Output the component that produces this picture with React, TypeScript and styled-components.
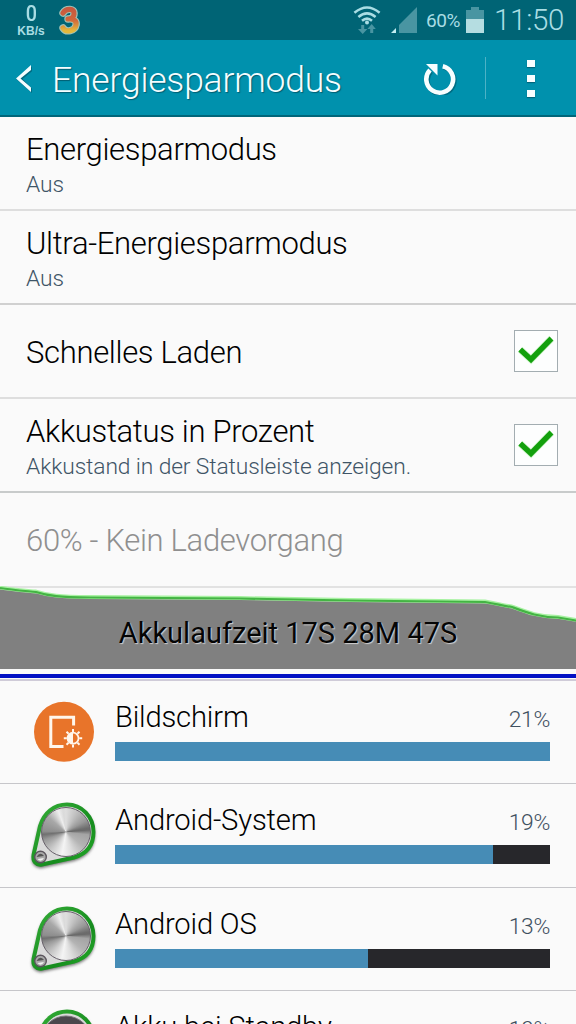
import React from 'react';
import styled, { createGlobalStyle } from 'styled-components';

const GlobalStyle = createGlobalStyle`
  * { box-sizing: border-box; }
  html, body { margin: 0; padding: 0; }
  body { background: #fafafa; font-family: Roboto, "Liberation Sans", sans-serif; font-weight: 300; overflow: hidden; }
  svg { display: block; flex: none; }
`;

const Screen = styled.main`
  width: 576px;
  height: 1024px;
  overflow: hidden;
  display: flex;
  flex-direction: column;
  background: #fafafa;
`;

const StatusBar = styled.div`
  flex: none;
  height: 40px;
  padding: 0 13px 0 16px;
  display: flex;
  align-items: center;
  background: #006475;
  color: #a9dde4;
`;

const NetSpeed = styled.div`
  width: 30px;
  margin-right: 12px;
  display: flex;
  flex-direction: column;
  align-items: center;
  font-family: "Liberation Sans", sans-serif;
`;

const SpeedValue = styled.span`
  font-family: Roboto, sans-serif;
  font-weight: 500;
  font-size: 22px;
  line-height: 22px;
  transform: scaleX(0.9);
`;

const SpeedUnit = styled.span`
  font-size: 12px;
  font-weight: 700;
  line-height: 12px;
`;

const Spacer = styled.div`
  flex: 1;
`;

const StatusIcons = styled.div`
  display: flex;
  align-items: center;
  gap: 9px;
`;

const BatteryPercent = styled.span`
  width: 37px;
  margin: 1px 3px 0 9px;
  font-size: 19px;
  font-weight: 400;
  letter-spacing: -0.4px;
  white-space: nowrap;
`;

const Clock = styled.span`
  width: 69px;
  margin-left: 10px;
  font-size: 29.5px;
  line-height: 40px;
  letter-spacing: -0.3px;
  white-space: nowrap;
`;

const ActionBar = styled.header`
  flex: none;
  height: 77px;
  padding: 0 41px 0 15px;
  display: flex;
  align-items: center;
  background: #0091ad;
  border-bottom: 2px solid #00667a;
  color: #f4fdff;
`;

const ActionTitle = styled.h1`
  margin: 4px 0 0 18px;
  flex: 1;
  font-size: 35.5px;
  line-height: 44px;
  font-weight: 300;
  letter-spacing: -0.2px;
  text-shadow: 1px 1px 1px rgba(0, 60, 75, 0.6);
  white-space: nowrap;
`;

const Divider = styled.div`
  width: 1px;
  height: 42px;
  margin: 0 41px 0 28px;
  background: #4db2c6;
`;

const OverflowDots = styled.div`
  display: grid;
  gap: 8px;
  margin-top: 2px;
`;

const Dot = styled.i`
  width: 8px;
  height: 7px;
  background: #f8feff;
  box-shadow: 0 1px 1px rgba(0, 60, 75, 0.5);
`;

const Setting = styled.section<{ $height: number; $line: string }>`
  flex: none;
  height: ${(p) => p.$height}px;
  padding: 0 18px 0 26px;
  display: flex;
  align-items: center;
  justify-content: space-between;
  border-bottom: 2px solid ${(p) => p.$line};
`;

const SettingText = styled.div`
  padding-top: 5px;
  display: flex;
  flex-direction: column;
`;

const Title = styled.div<{ $muted?: boolean }>`
  font-size: 31px;
  line-height: 36px;
  letter-spacing: -0.32px;
  color: ${(p) => (p.$muted ? '#8f8f8f' : '#000')};
  white-space: nowrap;
`;

const Summary = styled.div`
  font-size: 22.8px;
  line-height: 28px;
  margin-top: 3px;
  letter-spacing: -0.12px;
  color: #3f5567;
  white-space: nowrap;
`;

const CheckFrame = styled.div`
  width: 44px;
  height: 42px;
  border: 1px solid #a3adb1;
  background: #fdfefe;
  display: grid;
  place-items: center;
`;

const SingleLine = styled.div`
  padding-top: 3px;
`;

const Graph = styled.section`
  flex: none;
  height: 95px;
  margin-top: -2px;
  display: grid;
  border-bottom: 2px solid #cfcbd8;

  > * { grid-area: 1 / 1; }
`;

const GraphLabel = styled.div`
  padding: 29px 0 0 0;
  text-align: center;
  font-size: 29px;
  line-height: 36px;
  font-weight: 400;
  color: #050505;
  text-shadow: 1px 1px 1px #d0d0d0;
  white-space: nowrap;
`;

const UsageRow = styled.section<{ $height: number }>`
  flex: none;
  height: ${(p) => p.$height}px;
  padding: 0 26px 0 27px;
  display: flex;
  border-bottom: 1px solid #c6c6ca;
`;

const IconSlot = styled.div`
  width: 88px;
  padding-top: 15px;
`;

const UsageBody = styled.div`
  flex: 1;
  padding-top: 18px;
`;

const UsageHead = styled.div`
  height: 43px;
  display: flex;
  justify-content: space-between;
`;

const UsageName = styled.span`
  font-size: 29.2px;
  line-height: 37px;
  letter-spacing: -0.18px;
  color: #000;
  white-space: nowrap;
`;

const UsagePercent = styled.span`
  font-size: 22.8px;
  line-height: 42px;
  letter-spacing: -0.3px;
  color: #3f5060;
`;

const Track = styled.div`
  height: 19px;
  background: #27272b;
`;

const Fill = styled.div`
  height: 100%;
  background: #468cb6;
`;

const CarrierLogo = () => (
  <svg width="24" height="30" viewBox="0 0 24 30">
    <defs>
      <linearGradient id="carrier" x1="0" y1="0" x2="0" y2="1">
        <stop offset="0" stopColor="#c8593f" />
        <stop offset=".5" stopColor="#d0673b" />
        <stop offset="1" stopColor="#e4b93c" />
      </linearGradient>
    </defs>
    <g fill="none" strokeLinecap="round" strokeLinejoin="round">
      <path d="M5 8C8 3 17 3 16 9C16 12 13 14 10 14C15 13 19 16 18 20C17 26 8 28 5 23" stroke="#9fc3b8" strokeWidth="7.4" />
      <path d="M5 8C8 3 17 3 16 9C16 12 13 14 10 14C15 13 19 16 18 20C17 26 8 28 5 23" stroke="url(#carrier)" strokeWidth="5.2" />
    </g>
  </svg>
);

const WifiIcon = () => (
  <svg width="28" height="30" viewBox="0 0 28 30">
    <g fill="none" stroke="#a9dde4" strokeWidth="2.5">
      <path d="M1.4 7.8Q14-2.8 26.6 7.8" />
      <path d="M5.4 12Q14 4.8 22.6 12" />
      <path d="M9 15.8Q14 11.4 19 15.8" />
    </g>
    <circle cx="14" cy="17.6" r="2" fill="#a9dde4" />
    <path d="M8.2 20h3v4h3.2l-4.7 5-4.7-5h3.2zM17.2 28h3v-4h2.6l-4.1-5-4.3 5h2.8z" fill="#4995a2" />
  </svg>
);

const SignalIcon = () => (
  <svg width="27" height="27" viewBox="-1 0 27 27">
    <path d="M26 0V26H8V18z" fill="#4995a2" />
    <path d="M5 21V26H0z" fill="#c4edf1" />
  </svg>
);

const BatteryIcon = () => (
  <svg width="18" height="26" viewBox="0 0 18 26">
    <path d="M5 0H13V3H18V12H0V3H5z" fill="#4995a2" />
    <path d="M0 12H18V26H0z" fill="#b5dde1" />
  </svg>
);

const BackIcon = () => (
  <svg width="19" height="32" viewBox="0 0 19 32">
    <path d="M17 4.8V9.2L7.6 17 17 26.6V31L1 17z" fill="#004c5e" opacity=".55" />
    <path d="M16 3V8L5.5 16.5 16 25.5V30L1 16.5z" fill="#f4fdff" />
  </svg>
);

const RefreshIcon = () => (
  <svg width="34" height="34" viewBox="0 0 34 34">
    <g transform="translate(.8 1)" opacity=".5">
      <path d="M20 5.4A13.4 13.4 0 1 1 7.3 9.4" fill="none" stroke="#004c5e" strokeWidth="4.6" />
    </g>
    <path d="M19.8 5.2A13.4 13.4 0 1 1 7 9" fill="none" stroke="#f8feff" strokeWidth="4.6" />
    <path d="M3 3H14.5V14.5z" fill="#f8feff" />
  </svg>
);

const CheckIcon = () => (
  <svg width="36" height="30" viewBox="0 0 36 30">
    <path d="M2.2 13.5L13 23.5 33.5 2.5" fill="none" stroke="#d3f6cf" strokeWidth="7" />
    <path d="M2.2 13.5L13 23.5 33.5 2.5" fill="none" stroke="#13a00d" strokeWidth="5.4" />
  </svg>
);

const HistoryChart = () => (
  <svg width="576" height="93" viewBox="0 586 576 93">
    <path d="M0 585H576" stroke="#e2e2e2" strokeWidth="2" />
    <path d="M0 588C12 590 26 591 36 592C48 596 60 597 90 597.5L240 598.5L350 600.5L485 602C498 604 502 606 512 607C528 613 538 617 558 617.5L576 620.5V669H0z" fill="#808080" />
    <path d="M0 587.5C12 589.5 26 590.5 36 591.5C48 595.5 60 596.5 90 597L240 598L350 600L485 601.5C498 603.5 502 605.5 512 606.5C528 612.5 538 616.5 558 617L576 620" fill="none" stroke="#a8f2a2" strokeWidth="3.8" />
    <path d="M0 588C12 590 26 591 36 592C48 596 60 597 90 597.5L240 598.5L350 600.5L485 602C498 604 502 606 512 607C528 613 538 617 558 617.5L576 620.5" fill="none" stroke="#44b444" strokeWidth="2.2" />
    <path d="M0 674H576V678H0z" fill="#0210c4" />
  </svg>
);

const DisplayIcon = () => (
  <svg width="72" height="72" viewBox="0 0 72 72">
    <circle cx="37" cy="35.7" r="30" fill="#e8742a" />
    <g fill="none" stroke="#fff6ec">
      <path d="M46.6 29.5V21.2H23.8V50.5H36.5" strokeWidth="3" />
      <circle cx="46" cy="42.2" r="5.5" strokeWidth="1.7" />
      <path d="M46 33V36M46 48.5V51.5M36.8 42.2H39.8M52.2 42.2H55.2M39.5 35.7L41.6 37.8M50.4 46.6L52.5 48.7M52.5 35.7L50.4 37.8M41.6 46.6L39.5 48.7" strokeWidth="2" />
    </g>
    <path d="M46 36.7A5.5 5.5 0 0 0 46 47.7z" fill="#fff6ec" />
  </svg>
);

const Disc = styled.div`
  width: 50px;
  height: 50px;
  border-radius: 50%;
  border: 1.5px solid #67606a;
  background: conic-gradient(from 0deg, #dedede, #c4c4c4 25deg, #989898 60deg, #6c6c6c 80deg, #6a6a6a 85deg, #a4a4a4 97deg, #b4b4b4 130deg, #dedede 165deg, #f4f4f4 190deg, #cacaca 220deg, #989898 250deg, #707070 264deg, #8e8e8e 272deg, #a8a8a8 310deg, #eeeeee 340deg, #dadada 352deg, #dedede);
`;

const SystemIcon = ({ dark = false }: { dark?: boolean }) => (
  <svg width="74" height="76" viewBox="1 -1 74 76">
    <defs>
      <filter id="soft" x="-20%" y="-20%" width="140%" height="140%">
        <feGaussianBlur stdDeviation="1.8" />
      </filter>
      <linearGradient id="belt" x1="0" y1="0" x2="1" y2="1">
        <stop offset="0" stopColor="#35ae38" />
        <stop offset=".65" stopColor="#168c1e" />
        <stop offset="1" stopColor="#27ad2b" />
      </linearGradient>
    </defs>
    <path d="M14 26C18 13 28 4.5 41 4.5C56 4.5 67.5 17 67.5 32C67.5 46 60 54 48 57.5L16 64.5C10 65.5 6.5 61 7.5 55z" transform="translate(0 2)" fill="#555" stroke="#777" strokeWidth="3" filter="url(#soft)" />
    <path d="M14 26C18 13 28 4.5 41 4.5C56 4.5 67.5 17 67.5 32C67.5 46 60 54 48 57.5L16 64.5C10 65.5 6.5 61 7.5 55z" fill="#dadada" stroke="url(#belt)" strokeWidth="4" />
    {dark ? (
      <circle cx="40" cy="34" r="25" fill="#4b484d" stroke="#77737a" />
    ) : (
      <foreignObject x="15" y="7" width="51" height="51">
        <Disc />
      </foreignObject>
    )}
    <circle cx="14.5" cy="57" r="5.8" fill="#a9a9a9" stroke="#5b555d" strokeWidth="1.4" />
    <path d="M10.5 57Q14 51 18 56z" fill="#555" />
    <path d="M11.5 59Q15 63 18 58z" fill="#f2f2f2" />
  </svg>
);

const apps = [
  { name: 'Bildschirm', percent: 21, bar: 100, height: 103 },
  { name: 'Android-System', percent: 19, bar: 87, height: 104 },
  { name: 'Android OS', percent: 13, bar: 58.2, height: 103 },
  { name: 'Akku bei Standby', percent: 10, bar: 47, height: 104 },
];

export default function App() {
  return (
    <Screen>
      <GlobalStyle />
      <StatusBar>
        <NetSpeed>
          <SpeedValue>0</SpeedValue>
          <SpeedUnit>KB/s</SpeedUnit>
        </NetSpeed>
        <CarrierLogo />
        <Spacer />
        <StatusIcons>
          <WifiIcon />
          <SignalIcon />
        </StatusIcons>
        <BatteryPercent>60%</BatteryPercent>
        <BatteryIcon />
        <Clock>11:50</Clock>
      </StatusBar>
      <ActionBar>
        <BackIcon />
        <ActionTitle>Energiesparmodus</ActionTitle>
        <RefreshIcon />
        <Divider />
        <OverflowDots>
          <Dot />
          <Dot />
          <Dot />
        </OverflowDots>
      </ActionBar>
      <Setting $height={94} $line="#dedede">
        <SettingText>
          <Title>Energiesparmodus</Title>
          <Summary>Aus</Summary>
        </SettingText>
      </Setting>
      <Setting $height={94} $line="#d0d0d0">
        <SettingText>
          <Title>Ultra-Energiesparmodus</Title>
          <Summary>Aus</Summary>
        </SettingText>
      </Setting>
      <Setting $height={94} $line="#dedede">
        <SingleLine>
          <Title>Schnelles Laden</Title>
        </SingleLine>
        <CheckFrame>
          <CheckIcon />
        </CheckFrame>
      </Setting>
      <Setting $height={94} $line="#c8cbcb">
        <SettingText>
          <Title>Akkustatus in Prozent</Title>
          <Summary>Akkustand in der Statusleiste anzeigen.</Summary>
        </SettingText>
        <CheckFrame>
          <CheckIcon />
        </CheckFrame>
      </Setting>
      <Setting $height={95} $line="#e2e2e2">
        <SingleLine>
          <Title $muted>60% - Kein Ladevorgang</Title>
        </SingleLine>
      </Setting>
      <Graph>
        <HistoryChart />
        <GraphLabel>Akkulaufzeit 17S 28M 47S</GraphLabel>
      </Graph>
      {apps.map((app, i) => (
        <UsageRow key={app.name} $height={app.height}>
          <IconSlot>{i === 0 ? <DisplayIcon /> : <SystemIcon dark={i === 3} />}</IconSlot>
          <UsageBody>
            <UsageHead>
              <UsageName>{app.name}</UsageName>
              <UsagePercent>{app.percent}%</UsagePercent>
            </UsageHead>
            <Track>
              <Fill style={{ width: `${app.bar}%` }} />
            </Track>
          </UsageBody>
        </UsageRow>
      ))}
    </Screen>
  );
}
